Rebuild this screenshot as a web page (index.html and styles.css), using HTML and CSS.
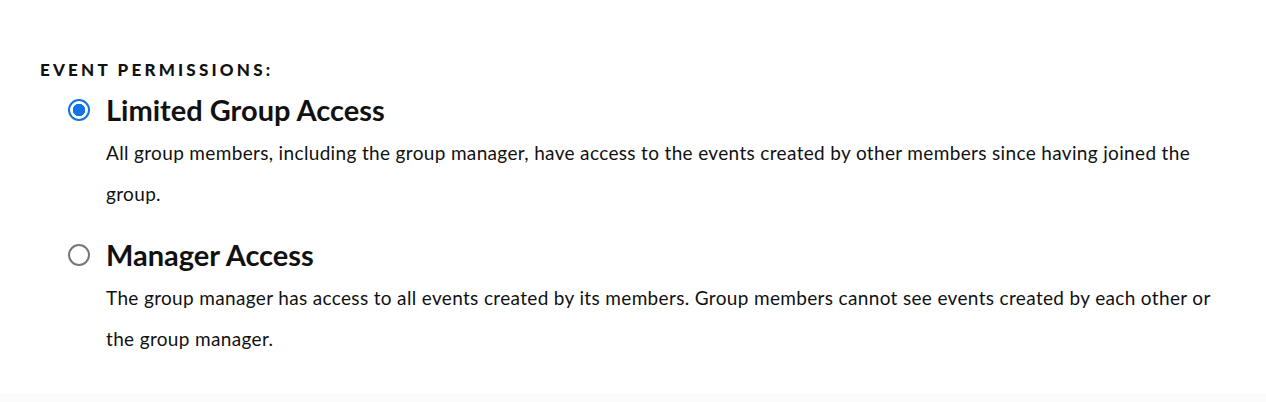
FILE: index.html
```html
<!DOCTYPE html>
<html>
<head>
<meta charset="utf-8">
<link rel="stylesheet" href="styles.css">
</head>
<body>
<div class="page">
  <section class="perms">
    <h2 class="perms-title">EVENT PERMISSIONS:</h2>
    <div class="option">
      <div class="option-head">
        <span class="radio checked"></span>
        <span class="option-label">Limited Group Access</span>
      </div>
      <p class="option-desc">All group members, including the group manager, have access to the events created by other members since having joined the group.</p>
    </div>
    <div class="option">
      <div class="option-head">
        <span class="radio"></span>
        <span class="option-label">Manager Access</span>
      </div>
      <p class="option-desc">The group manager has access to all events created by its members. Group members cannot see events created by each other or the group manager.</p>
    </div>
  </section>
  <div class="footer-band"></div>
</div>
</body>
</html>
```

FILE: styles.css
```css
html, body {
  margin: 0;
  padding: 0;
  background: #ffffff;
}
body {
  font-family: Lato, "Open Sans", sans-serif;
  color: #111;
}
.page {
  display: flex;
  flex-direction: column;
  height: 402px;
}
.perms {
  flex: 1;
  padding: 59px 40px 0 40px;
}
.perms-title {
  margin: 0 0 9px 0;
  font-size: 17px;
  font-weight: 900;
  letter-spacing: 3.2px;
  line-height: 22px;
}
.option {
  margin-left: 28px;
}
.option + .option {
  margin-top: 21px;
}
.option-head {
  display: flex;
  align-items: center;
  gap: 16px;
  height: 40px;
}
.radio {
  box-sizing: border-box;
  width: 22px;
  height: 22px;
  border-radius: 50%;
  border: 2px solid #777;
  flex: none;
}
.radio.checked {
  border-color: #1473e6;
  background: radial-gradient(circle, #1473e6 0 6px, #fff 6.5px);
}
.option-label {
  font-size: 29px;
  font-weight: 700;
  line-height: 40px;
  color: #111;
}
.option-desc {
  margin: 2px 0 0 38px;
  font-size: 19px;
  line-height: 41px;
  letter-spacing: 0.34px;
  color: #111;
  max-width: 1125px;
}
.footer-band {
  height: 9px;
  background: #fbfbfb;
}
```
